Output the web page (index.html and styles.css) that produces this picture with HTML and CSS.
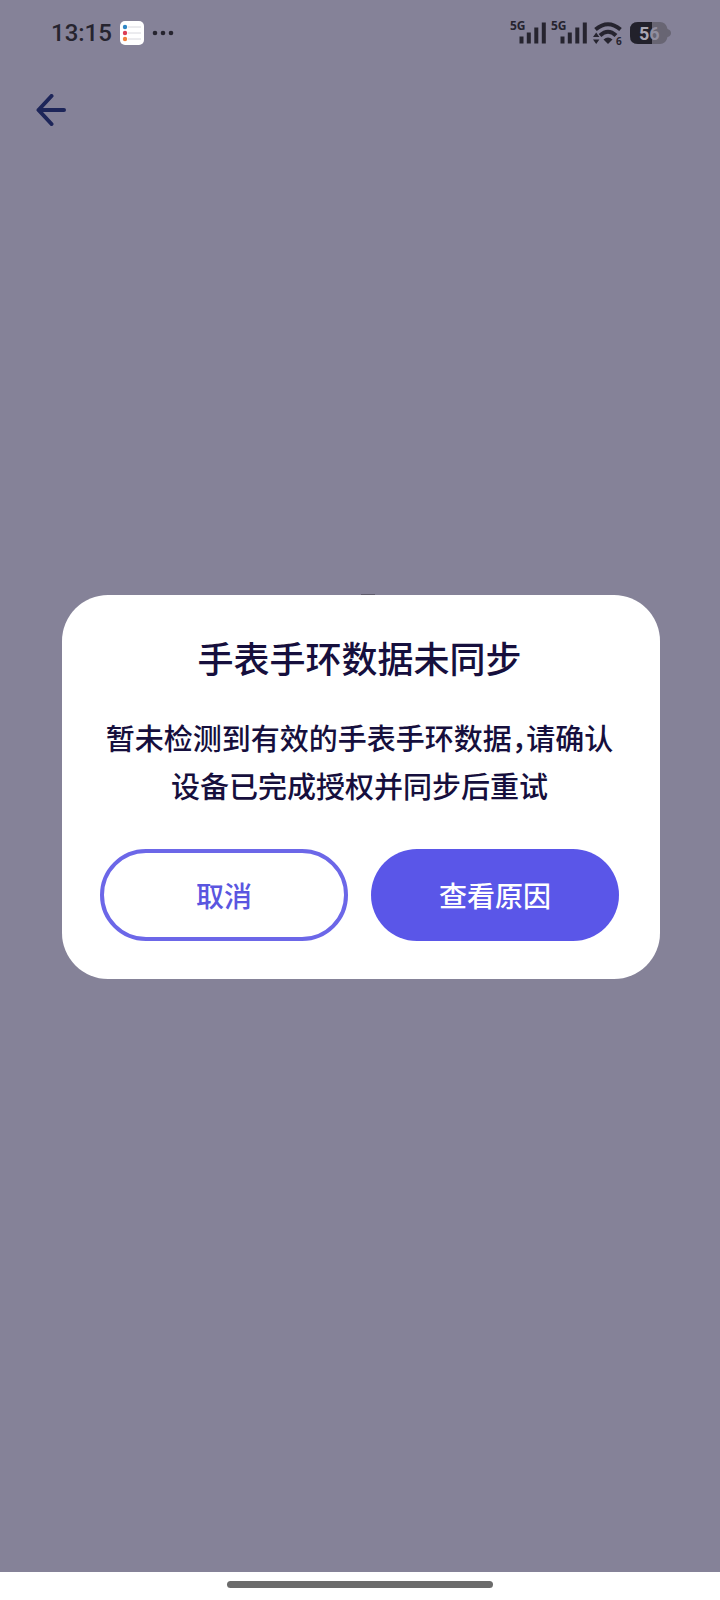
FILE: index.html
```html
<!DOCTYPE html>
<html lang="zh-CN">
<head>
    <meta charset="UTF-8">
    <meta name="viewport" content="width=device-width, initial-scale=1.0">
    <title>手表手环数据未同步</title>
    <link rel="stylesheet" href="styles.css">
</head>
<body>
    <div class="page">
        <header class="status-bar">
            <div class="status-left">
                <span class="time">13:15</span>
                <svg class="app-icon" width="24" height="24" viewBox="0 0 24 24">
                    <rect width="24" height="24" rx="5" fill="#fff"/>
                    <path d="M8 6h13M8 12h13M8 18h13" stroke="#d8d8de" stroke-width="1"/>
                    <circle cx="5" cy="6" r="2.200" fill="#2f86c5"/>
                    <circle cx="5" cy="12" r="2.200" fill="#dc3d55"/>
                    <circle cx="5" cy="18" r="2.200" fill="#f0803c"/>
                </svg>
                <svg width="22" height="24" viewBox="0 0 22 24" fill="#26242f">
                    <circle cx="3" cy="12" r="2.300"/>
                    <circle cx="11" cy="12" r="2.300"/>
                    <circle cx="19" cy="12" r="2.300"/>
                </svg>
            </div>
            <div class="status-right">
                <svg class="signal" width="36" height="24" viewBox="0 0 36 24">
                    <text x="-1" y="9">5G</text>
                    <path d="M10.500 15.500v7M17.800 11.500v11M25.300 6.500v16M32.800 1.500v21"/>
                </svg>
                <svg class="signal" width="36" height="24" viewBox="0 0 36 24">
                    <text x="-1" y="9">5G</text>
                    <path d="M10.500 15.500v7M17.800 11.500v11M25.300 6.500v16M32.800 1.500v21"/>
                </svg>
                <svg class="wifi" width="30" height="24" viewBox="0 0 30 24">
                    <path class="wave" d="M2.500 8.500Q15-2 27.500 8.500M7 14.500Q15 7 23 14.500"/>
                    <path d="M10.500 18.500Q15 14.500 19.500 18.500L15 23Z"/>
                    <path d="M0 16l3.200-4.500 3.200 4.500zM0 18.500h6.400L3.200 23z"/>
                    <text x="23" y="24">6</text>
                </svg>
                <svg class="battery" width="41" height="24" viewBox="0 0 41 24">
                    <path d="M8 1h22q6 0 7.500 7 3.500 1 3.500 4t-3.500 4q-1.500 7-7.500 7H8q-8 0-8-8V9q0-8 8-8z" fill="#686573"/>
                    <path d="M8 1h14v22H8q-8 0-8-8V9q0-8 8-8z" fill="#22212b"/>
                    <text x="9" y="19">5<tspan class="dim">6</tspan></text>
                </svg>
            </div>
        </header>

        <nav class="toolbar">
            <button class="back" type="button" aria-label="返回">
                <svg width="32" height="32" viewBox="0 0 32 32">
                    <path d="M16.500 2L3.500 16l13 14M3.500 16H29"/>
                </svg>
            </button>
        </nav>
    </div>

    <footer class="home-bar">
        <div class="home-handle"></div>
    </footer>

    <div class="overlay">
        <div class="dialog" role="dialog" aria-labelledby="dialogTitle">
            <h1 class="dialog-title" id="dialogTitle">手表手环数据未同步</h1>
            <p class="dialog-text">暂未检测到有效的手表手环数据，请确认设备已完成授权并同步后重试</p>
            <div class="actions">
                <button class="btn btn-outline" type="button">取消</button>
                <button class="btn btn-primary" type="button">查看原因</button>
            </div>
        </div>
    </div>
</body>
</html>
```

FILE: styles.css
```css
* {
    box-sizing: border-box;
}
body {
    margin: 0;
    min-height: 100vh;
    display: flex;
    flex-direction: column;
    background: #858298;
    font-family: "Noto Sans", "Noto Sans CJK SC", sans-serif;
    color: #160f3d;
}
button {
    border: none;
    padding: 0;
    background: none;
    font-family: inherit;
    cursor: pointer;
}
svg {
    display: block;
}
.page {
    flex: 1;
}

/* status bar */
.status-bar {
    display: flex;
    justify-content: space-between;
    align-items: center;
    height: 66px;
    padding: 0 49px 0 51px;
    font-family: Roboto, sans-serif;
    color: #26242f;
}
.status-left,
.status-right {
    display: flex;
    align-items: center;
}
.status-left {
    gap: 8px;
}
.status-right {
    gap: 5px;
}
.time {
    font-size: 24px;
    font-weight: 500;
    line-height: 24px;
}
.signal {
    overflow: visible;
}
.signal text,
.wifi text {
    font-family: "Noto Sans", sans-serif;
    font-size: 12px;
    font-weight: 700;
    fill: #26242f;
}
.wifi text {
    font-size: 10px;
}
.signal path,
.wave {
    fill: none;
    stroke: #26242f;
    stroke-width: 4;
    stroke-linecap: butt;
}
.wifi {
    fill: #26242f;
    overflow: visible;
}
.battery {
    margin-left: 2px;
}
.battery text {
    font-family: Roboto, sans-serif;
    font-size: 18px;
    font-weight: 700;
    fill: #aaa8b4;
}
.battery .dim {
    fill: #918e9f;
}

.toolbar {
    display: flex;
    padding: 28px 35px;
}
.back path {
    fill: none;
    stroke: #1d2559;
    stroke-width: 4;
    stroke-linecap: round;
    stroke-linejoin: round;
}

/* dialog */
.overlay {
    position: fixed;
    inset: 0 0 26px;
    display: flex;
    align-items: center;
    justify-content: center;
    padding: 0 60px 0 62px;
}
.dialog {
    position: relative;
    width: 100%;
    padding: 39px 41px 38px 38px;
    border-radius: 46px;
    background: #fff;
    text-align: center;
}
/* edge of the loader behind the dialog */
.dialog::before {
    content: "";
    position: absolute;
    top: -1px;
    left: 50%;
    width: 14px;
    height: 1px;
    background: #5f5c6c;
}
.dialog-title {
    margin: 0 0 29px;
    font-size: 36px;
    font-weight: 500;
    line-height: 52px;
}
.dialog-text {
    margin: 0 0 38px;
    font-size: 29px;
    font-weight: 500;
    line-height: 48px;
    font-feature-settings: "halt";
}
.actions {
    display: grid;
    grid-template-columns: 1fr 1fr;
    gap: 23px;
}
.btn {
    height: 92px;
    border-radius: 46px;
    font-size: 28px;
    font-weight: 500;
}
.btn-outline {
    border: 4px solid #6c67e8;
    color: #5a56e0;
}
.btn-primary {
    background: #5a56e8;
    color: #fff;
}

.home-bar {
    display: flex;
    justify-content: center;
    align-items: center;
    height: 28px;
    padding-bottom: 4px;
    background: #fff;
}
.home-handle {
    width: 37%;
    height: 7px;
    border-radius: 4px;
    background: #6b6b6b;
}
```
